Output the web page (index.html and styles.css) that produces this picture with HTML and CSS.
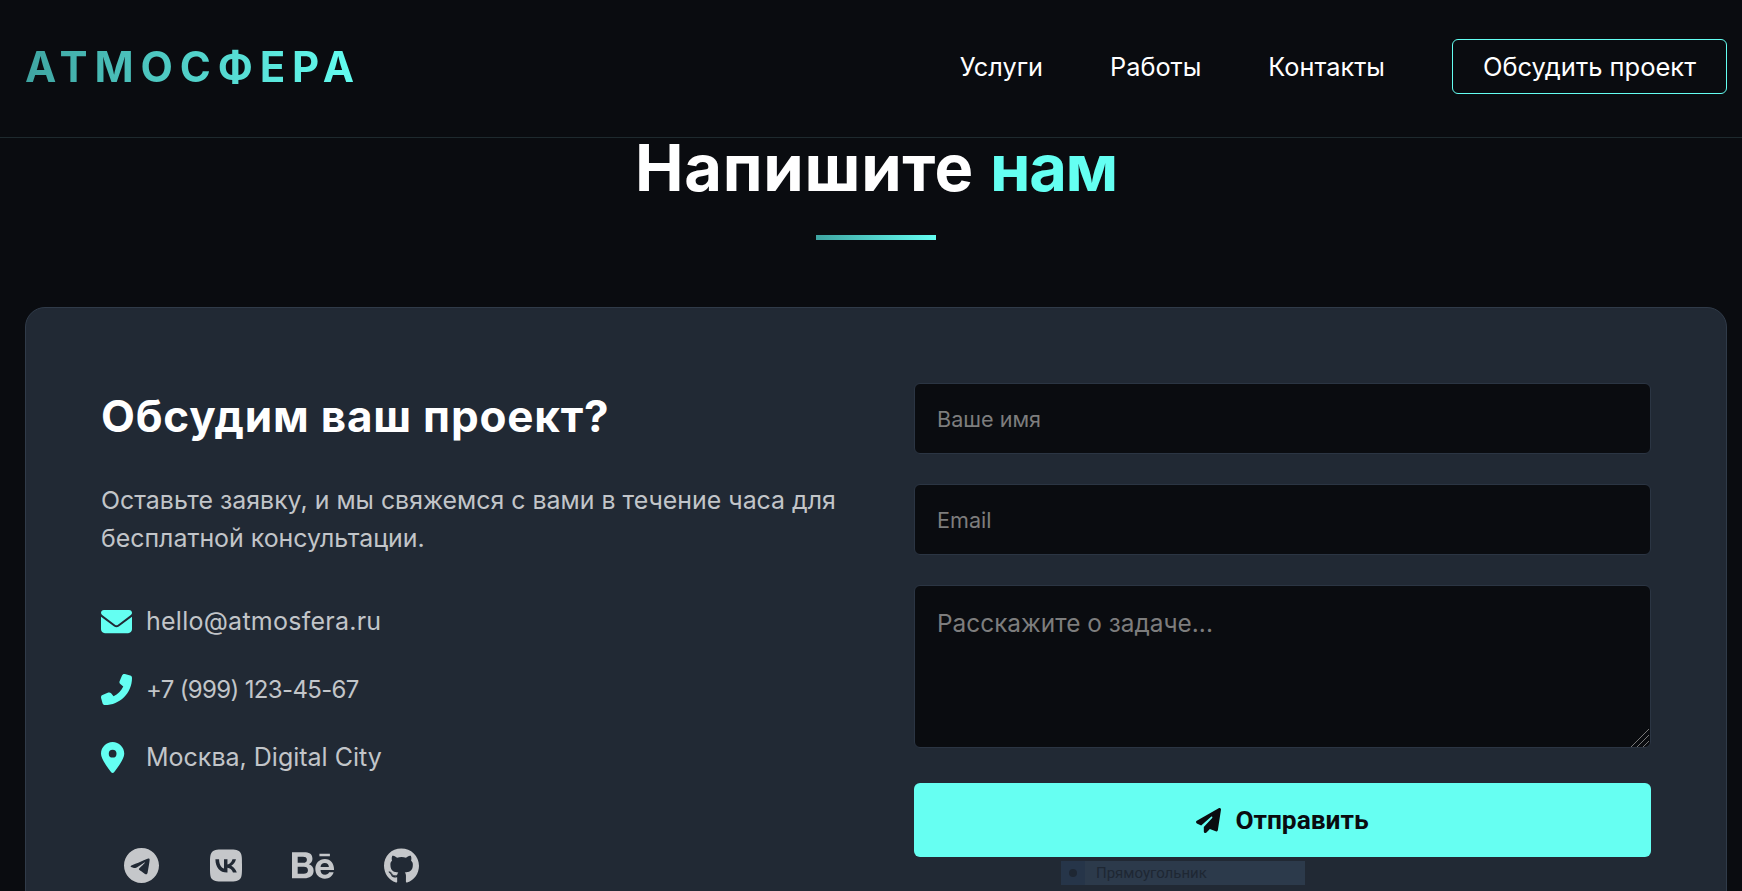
FILE: index.html
```html
<!DOCTYPE html>
<html lang="ru">
<head>
<meta charset="utf-8">
<title>Атмосфера</title>
<link rel="stylesheet" href="styles.css">
</head>
<body>
<header class="site-header">
  <a class="logo">АТМОСФЕРА</a>
  <nav class="nav">
    <a class="nav-link">Услуги</a>
    <a class="nav-link">Работы</a>
    <a class="nav-link">Контакты</a>
    <a class="nav-cta">Обсудить проект</a>
  </nav>
</header>
<main class="contact">
  <h2 class="title">Напишите <span class="accent">нам</span></h2>
  <div class="title-bar"></div>
  <section class="card">
    <div class="info">
      <h3 class="info-title">Обсудим ваш проект?</h3>
      <p class="info-text">Оставьте заявку, и мы свяжемся с вами в течение часа для бесплатной консультации.</p>
      <ul class="contacts">
        <li class="contact-row">
          <svg class="contact-icon" viewBox="0 0 512 512"><path d="M48 64C21.5 64 0 85.5 0 112c0 15.1 7.1 29.3 19.2 38.4L236.8 313.6c11.4 8.5 27 8.5 38.4 0L492.8 150.4c12.1-9.1 19.2-23.3 19.2-38.4c0-26.5-21.5-48-48-48H48zM0 176V384c0 35.3 28.7 64 64 64H448c35.3 0 64-28.7 64-64V176L294.4 339.2c-22.8 17.1-54 17.1-76.8 0L0 176z"/></svg>
          <span class="mail">hello@atmosfera.ru</span>
        </li>
        <li class="contact-row">
          <svg class="contact-icon" viewBox="0 0 512 512"><g transform="translate(512 0) scale(-1 1)"><path d="M164.9 24.6c-7.7-18.6-28-28.5-47.4-23.2l-88 24C12.1 30.2 0 46 0 64C0 311.4 200.6 512 448 512c18 0 33.8-12.1 38.6-29.5l24-88c5.3-19.4-4.6-39.7-23.2-47.4l-96-40c-16.3-6.8-35.2-2.1-46.3 11.6L304.7 368C234.3 334.7 177.3 277.7 144 207.3L193.3 167c13.7-11.2 18.4-30 11.6-46.3l-40-96z"/></g></svg>
          <span class="phone">+7 (999) 123-45-67</span>
        </li>
        <li class="contact-row">
          <svg class="contact-icon" viewBox="0 0 384 512" preserveAspectRatio="xMinYMid meet"><path d="M215.7 499.2C267 435 384 279.4 384 192C384 86 298 0 192 0S0 86 0 192c0 87.4 117 243 168.3 307.2c12.3 15.3 35.1 15.3 47.4 0zM192 128a64 64 0 1 1 0 128 64 64 0 1 1 0-128z"/></svg>
          <span>Москва, Digital City</span>
        </li>
      </ul>
      <div class="socials">
        <svg class="social tg" viewBox="0 8 496 496"><path d="M248 8C111 8 0 119 0 256S111 504 248 504 496 393 496 256 385 8 248 8zM363 176.7c-3.7 39.2-19.9 134.4-28.1 178.3-3.5 18.6-10.3 24.8-16.9 25.4-14.4 1.3-25.3-9.5-39.3-18.7-21.8-14.3-34.2-23.2-55.3-37.2-24.5-16.1-8.6-25 5.3-39.5 3.7-3.8 67.1-61.5 68.3-66.7 .2-.7 .3-3.1-1.2-4.4s-3.6-.8-5.1-.5q-3.3 .7-104.6 69.1-14.8 10.2-26.9 9.9c-8.9-.2-25.9-5-38.6-9.1-15.5-5-27.9-7.7-26.8-16.3q.8-6.7 18.5-13.7 108.4-47.2 144.6-62.3c68.9-28.6 83.2-33.6 92.5-33.8 2.1 0 6.6 .5 9.6 2.9a10.5 10.5 0 0 1 3.5 6.7A43.8 43.8 0 0 1 363 176.7z"/></svg>
        <svg class="social vk" viewBox="0 32 448 448"><path d="M31.5 63.5C0 95 0 145.7 0 247V265C0 366.3 0 417 31.5 448.5C63 480 113.7 480 215 480H233C334.3 480 385 480 416.5 448.5C448 417 448 366.3 448 265V247C448 145.7 448 95 416.5 63.5C385 32 334.3 32 233 32H215C113.7 32 63 32 31.5 63.5zM75.6 168.3H126.7C128.4 253.8 166.1 290 196 297.4V168.3H244.2V242C273.7 238.8 304.6 205.2 315.1 168.3H363.3C359.3 187.4 351.5 205.6 340.2 221.6C328.9 237.6 314.5 251.1 297.7 261.2C316.4 270.5 332.9 283.6 346.1 299.8C359.4 315.9 369 334.6 374.5 354.7H321.4C316.6 337.3 306.6 321.6 292.9 309.8C279.1 297.9 262.2 290.4 244.2 288.1V354.7H238.4C136.3 354.7 78 284.7 75.6 168.3z"/></svg>
        <svg class="social be" viewBox="0 75 576 362"><path d="M232 237.2c31.8-15.2 48.4-38.2 48.4-74 0-70.6-52.6-87.8-113.3-87.8H0v354.4h171.8c64.4 0 124.9-30.9 124.9-102.9 0-44.5-21.1-77.4-64.7-89.7zM77.9 135.9H151c28.1 0 53.4 7.9 53.4 40.5 0 30.1-19.7 42.2-47.5 42.2h-79V135.9zm83.3 233.7H77.9V272h84.9c34.3 0 56 14.3 56 50.6 0 35.8-25.9 47-57.6 47zm358.5-240.7H376V94h143.7v34.9zM576 305.2c0-75.9-44.4-139.2-124.9-139.2-78.2 0-131.3 58.8-131.3 135.8 0 79.9 50.3 134.7 131.3 134.7 61.3 0 101-27.6 120.1-86.3H509.9c-6.7 21.9-34.3 33.5-55.7 33.5-41.3 0-63-24.2-63-65.3h185.1c.3-4.2 .7-8.7 .7-13.2zM391.3 275c2.3-33.7 24.7-54.8 58.5-54.8 35.4 0 53.2 20.8 56.2 54.8H391.3z"/></svg>
        <svg class="social gh" viewBox="0 8 496 484"><path d="M165.9 397.4c0 2-2.3 3.6-5.2 3.6-3.3 .3-5.6-1.3-5.6-3.6 0-2 2.3-3.6 5.2-3.6 3-.3 5.6 1.3 5.6 3.6zm-31.1-4.5c-.7 2 1.3 4.3 4.3 4.9 2.6 1 5.6 0 6.2-2s-1.3-4.3-4.3-5.2c-2.6-.7-5.5 .3-6.2 2.3zm44.2-1.7c-2.9 .7-4.9 2.6-4.6 4.9 .3 2 2.9 3.3 5.9 2.6 2.9-.7 4.9-2.6 4.6-4.6-.3-1.9-3-3.2-5.9-2.9zM244.8 8C106.1 8 0 113.3 0 252c0 110.9 69.8 205.8 169.5 239.2 12.8 2.3 17.3-5.6 17.3-12.1 0-6.2-.3-40.4-.3-61.4 0 0-70 15-84.7-29.8 0 0-11.4-29.1-27.8-36.6 0 0-22.9-15.7 1.6-15.4 0 0 24.9 2 38.6 25.8 21.9 38.6 58.6 27.5 72.9 20.9 2.3-16 8.8-27.1 16-33.7-55.9-6.2-112.3-14.3-112.3-110.5 0-27.5 7.6-41.3 23.6-58.9-2.6-6.5-11.1-33.3 2.6-67.9 20.9-6.5 69 27 69 27 20-5.6 41.5-8.5 62.8-8.5s42.8 2.9 62.8 8.5c0 0 48.1-33.6 69-27 13.7 34.7 5.2 61.4 2.6 67.9 16 17.7 25.8 31.5 25.8 58.9 0 96.5-58.9 104.2-114.8 110.5 9.2 7.9 17 22.9 17 46.4 0 33.7-.3 75.4-.3 83.6 0 6.5 4.6 14.4 17.3 12.1C428.2 457.8 496 362.9 496 252 496 113.3 383.5 8 244.8 8zM97.2 352.9c-1.3 1-1 3.3 .7 5.2 1.6 1.6 3.9 2.3 5.2 1 1.3-1 1-3.3-.7-5.2-1.6-1.6-3.9-2.3-5.2-1zm-10.8-8.1c-.7 1.3 .3 2.9 2.3 3.9 1.6 1 3.6 .7 4.3-.7 .7-1.3-.3-2.9-2.3-3.9-2-.6-3.6-.3-4.3 .7zm32.4 35.6c-1.6 1.3-1 4.3 1.3 6.2 2.3 2.3 5.2 2.6 6.5 1 1.3-1.3 .7-4.3-1.3-6.2-2.2-2.3-5.2-2.6-6.5-1zm-11.4-14.7c-1.6 1-1.6 3.6 0 5.9 1.6 2.3 4.3 3.3 5.6 2.3 1.6-1.3 1.6-3.9 0-6.2-1.4-2.3-4-3.3-5.6-2z"/></svg>
      </div>
    </div>
    <form class="form">
      <input class="field" type="text" placeholder="Ваше имя">
      <input class="field" type="email" placeholder="Email">
      <div class="area-wrap">
        <textarea class="field area" placeholder="Расскажите о задаче..."></textarea>
        <svg class="grip" viewBox="0 0 18 18"><path d="M0 18L18 0M6 18L18 6M12 18L18 12"/></svg>
      </div>
      <button class="send" type="button">
        <svg class="send-icon" viewBox="0 0 512 512"><path d="M498.1 5.6c10.1 7 15.4 19.1 13.5 31.2l-64 416c-1.5 9.7-7.4 18.2-16 23s-18.9 5.4-28 1.6L284 427.7l-68.5 74.1c-8.9 9.7-22.9 12.9-35.2 8.1S160 493.2 160 480V396.4c0-4 1.5-7.8 4.2-10.7L331.8 202.8c5.8-6.3 5.6-16-.4-22s-15.7-6.4-22-.7L106 360.8 17.7 316.6C7.1 311.3 .3 300.7 0 288.9s5.9-22.8 16.1-28.7l448-256c10.7-6.1 23.9-5.5 34 1.4z"/></svg>
        <span>Отправить</span>
      </button>
      <div class="layer-tip"><span class="layer-mark"><span class="layer-dot"></span></span><span class="layer-name">Прямоугольник</span></div>
    </form>
  </section>
</main>
</body>
</html>
```
FILE: styles.css
```css
* { box-sizing: border-box; }
html, body { margin: 0; height: 891px; overflow: hidden; }
body {
  background: #0a0c10;
  color: #fff;
  font-family: Inter, "Noto Sans", sans-serif;
}
.site-header {
  height: 138px;
  border-bottom: 1px solid #1e2a2e;
  padding: 0 15px 4px 25px;
  display: flex;
  align-items: center;
  justify-content: space-between;
}
.logo {
  font-size: 42px;
  font-weight: 700;
  letter-spacing: 6.9px;
  background: linear-gradient(90deg, #3fa5a2, #64fff2);
  -webkit-background-clip: text;
  background-clip: text;
  color: transparent;
}
.nav { display: flex; align-items: center; gap: 67px; }
.nav-link { font-size: 25.3px; font-weight: 400; }
.nav-cta {
  width: 275px;
  height: 55px;
  border: 1px solid #64fff2;
  border-radius: 6px;
  font-size: 25.5px;
  display: flex;
  align-items: center;
  justify-content: center;
}
.contact { padding: 0 15px 0 25px; }
.title {
  margin: -1px 0 0;
  height: 62px;
  line-height: 62px;
  text-align: center;
  font-size: 65px;
  font-weight: 700;
  letter-spacing: 0.7px;
}
.accent { color: #64fff2; letter-spacing: -1.4px; }
.title-bar {
  width: 120px;
  height: 5px;
  margin: 36px auto 67px;
  background: linear-gradient(90deg, #3fa5a2, #64fff2);
}
.card {
  height: 700px;
  background: #212934;
  border: 1px solid #303b49;
  border-radius: 20px;
  padding: 75px;
  display: grid;
  grid-template-columns: 1fr 1fr;
  column-gap: 76px;
  align-items: start;
}
.info-title {
  margin: 7px 0 0;
  font-size: 44px;
  letter-spacing: 0.8px;
  line-height: 52px;
  font-weight: 700;
}
.info-text {
  margin: 39px 0 0;
  font-size: 24.9px;
  line-height: 38px;
  color: #c2c5c9;
}
.contacts {
  list-style: none;
  margin: 45px 0 0;
  padding: 0;
  display: flex;
  flex-direction: column;
  gap: 30px;
}
.contact-row {
  display: flex;
  align-items: center;
  gap: 14px;
  height: 38px;
  font-size: 25px;
  color: #c2c5c9;
}
.mail { letter-spacing: 0.25px; }
.phone { font-size: 24px; letter-spacing: -0.65px; }
.contact-icon { width: 31px; height: 31px; fill: #64fff2; flex: none; }
.socials {
  margin-top: 72px;
  margin-left: 23px;
  display: flex;
  align-items: center;
  gap: 50px;
}
.social { height: 35px; fill: #c5c7ca; flex: none; }
.tg { width: 35px; }
.vk { width: 32px; margin-left: 1px; }
.be { width: 42px; height: 27px; }
.gh { width: 35px; }
.form { position: relative; display: flex; flex-direction: column; gap: 30px; }
.field {
  display: block;
  width: 100%;
  height: 71px;
  padding: 0 22px;
  background: #0a0c10;
  border: 1px solid #2b3543;
  border-radius: 6px;
  color: #fff;
  font-family: Inter, sans-serif;
  font-size: 21.6px;
  outline: none;
}
.area-wrap { position: relative; height: 163px; }
.area {
  height: 163px;
  padding: 22px 22px;
  font-size: 24.4px;
  resize: none;
}
.field::placeholder { color: #7d7d7d; }
.grip {
  position: absolute;
  right: 2px;
  bottom: 1px;
  width: 18px;
  height: 18px;
  fill: none;
  stroke: #777;
  stroke-width: 1;
}
.send {
  height: 74px;
  margin-top: 5px;
  border: 0;
  border-radius: 6px;
  background: #66fff2;
  color: #0a0c10;
  font-family: Roboto, sans-serif;
  font-size: 26.3px;
  font-weight: 700;
  display: flex;
  align-items: center;
  justify-content: center;
  gap: 14px;
}
.send-icon { width: 25px; height: 25px; fill: #0a0c10; }
.layer-tip {
  position: absolute;
  left: 147px;
  top: 478px;
  width: 244px;
  height: 24px;
  background: #2c3a4b;
  display: flex;
  align-items: center;
  color: #1e2733;
  font-family: Roboto, sans-serif;
  font-size: 15px;
}
.layer-mark {
  width: 24px;
  height: 24px;
  background: #263549;
  display: flex;
  align-items: center;
  justify-content: center;
}
.layer-dot { width: 8px; height: 8px; border-radius: 50%; background: #1e2733; }
.layer-name { margin-left: 11px; }
```
